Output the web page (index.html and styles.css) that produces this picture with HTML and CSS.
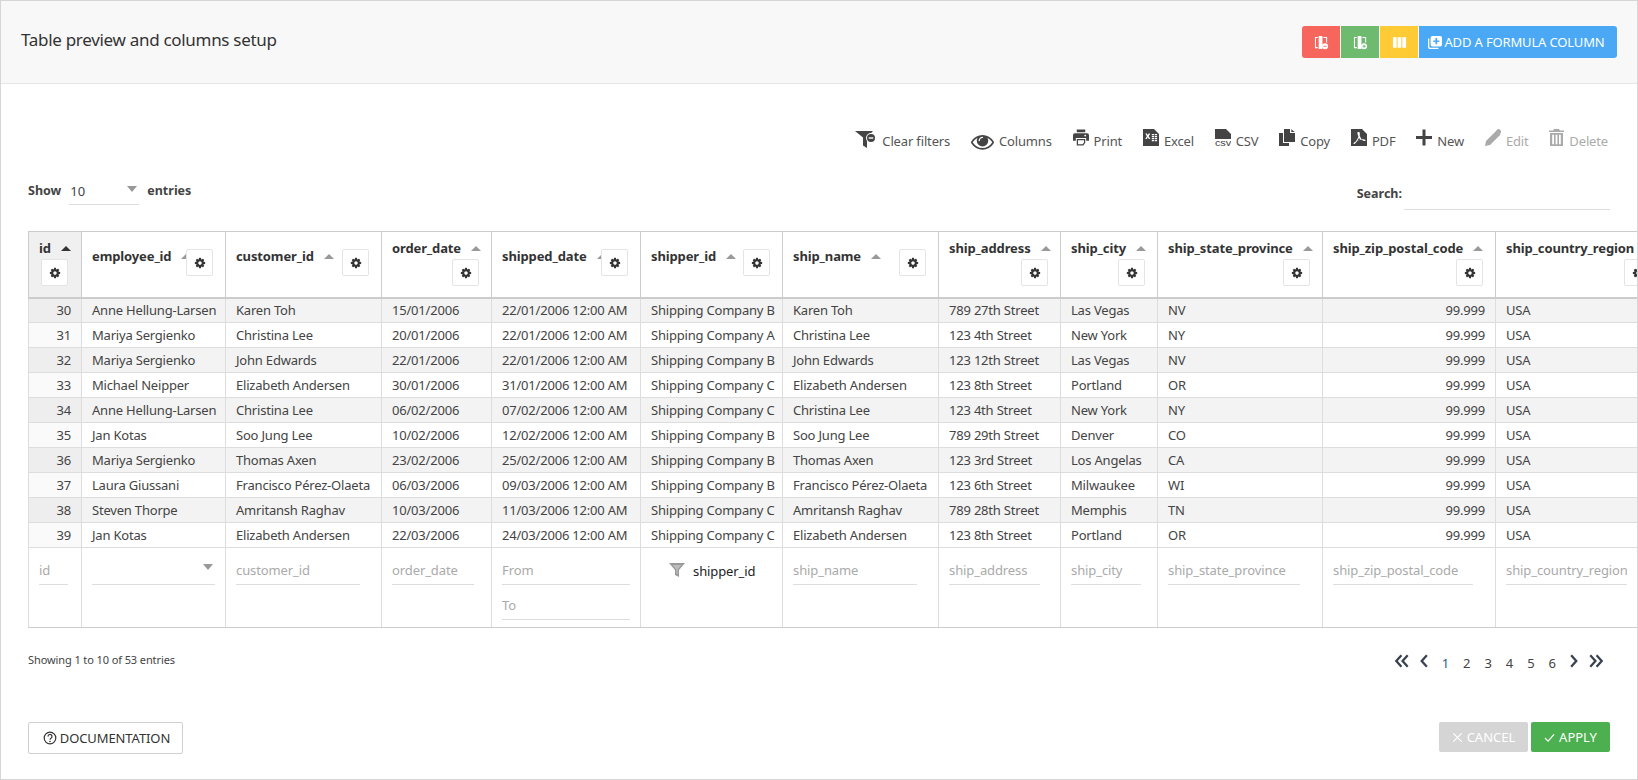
FILE: index.html
```html
<!DOCTYPE html>
<html lang="en">
<head>
<meta charset="utf-8">
<title>Table preview and columns setup</title>
<link rel="stylesheet" href="styles.css">
</head>
<body>
<svg class="defs" aria-hidden="true">
  <symbol id="cog" viewBox="0 0 1792 1792"><path d="M1152 896q0-106-75-181t-181-75-181 75-75 181 75 181 181 75 181-75 75-181zm512-109v222q0 12-8 23t-20 13l-185 28q-19 54-39 91 35 50 107 138 10 12 10 25t-9 23q-27 37-99 108t-94 71q-12 0-26-9l-138-108q-44 23-91 38-16 136-29 186-7 28-36 28h-222q-14 0-24.500-8.500t-11.500-21.500l-28-184q-49-16-90-37l-141 107q-10 9-25 9-14 0-25-11-126-114-165-168-7-10-7-23 0-12 8-23 15-21 51-66.500t54-70.500q-27-50-41-99l-183-27q-13-2-21-12.500t-8-23.500v-222q0-12 8-23t19-13l186-28q14-46 39-92-40-57-107-138-10-12-10-24 0-10 9-23 26-36 98.500-107.500t94.500-71.500q13 0 26 10l138 107q44-23 91-38 16-136 29-186 7-28 36-28h222q14 0 24.500 8.500t11.500 21.500l28 184q49 16 90 37l142-107q9-9 24-9 13 0 25 10 129 119 165 170 7 8 7 22 0 12-8 23-15 21-51 66.500t-54 70.500q26 50 41 98l183 28q13 2 21 12.500t8 23.500z"/></symbol>
  <symbol id="funnel" viewBox="0 0 16 16"><path d="M0 1h16l-6 7v7l-4-2V8z" fill-rule="evenodd"/><path d="M3.500 3h9l-3.800 4.400v4.800l-1.400-.7V7.400z" fill="#fff" opacity=".35"/></symbol>
</svg>
<main class="panel">
  <header class="head">
    <h1 class="title">Table preview and columns setup</h1>
    <div class="actions">
      <button class="act red" aria-label="Remove column"><svg class="act-i" viewBox="0 0 16 16"><path d="M1 2h3v1.100H2.100v9.800H4V14H1zM5 1h4v14H5zM10 2h4v6h-1.100V3.100H10z"/><circle cx="11.800" cy="12" r="3.200"/><path d="M10.200 11.500h3.200v1h-3.200z" fill="#f7665d"/></svg></button>
      <button class="act green" aria-label="Add column"><svg class="act-i" viewBox="0 0 16 16"><path d="M1 2h3v1.100H2.100v9.800H4V14H1zM5 1h4v14H5zM10 2h4v6h-1.100V3.100H10z"/><circle cx="11.800" cy="12" r="3.200"/><path d="M11.300 10.300h1v1.200h1.200v1h-1.200v1.200h-1v-1.200h-1.200v-1h1.200z" fill="#6ebb6f"/></svg></button>
      <button class="act yellow" aria-label="Columns"><svg class="act-i" viewBox="0 0 16 16"><path d="M1 2.500h4v11H1zM6 2.500h4v11H6zM11 2.500h4v11h-4z"/></svg></button>
      <button class="act blue"><svg class="act-i plus-i" viewBox="0 0 16 16"><path d="M5 1h9a2 2 0 0 1 2 2v8a2 2 0 0 1-2 2H5a2 2 0 0 1-2-2V3a2 2 0 0 1 2-2zm3.500 2.500v2.700H6v1.700h2.500v2.600h2V7.900H13V6.200h-2.500V3.500z" fill-rule="evenodd"/><path d="M0 4h1.500v9.500a1 1 0 0 0 1 1H12V16H2a2 2 0 0 1-2-2z"/></svg>ADD A FORMULA COLUMN</button>
    </div>
  </header>

  <section class="body">
    <nav class="tools">
      <a class="tool"><svg class="ti ti-filter" viewBox="0 0 22 18"><path d="M0 0h18l-6 6.500V17l-4-2.500V6.500z"/><circle cx="16" cy="7" r="5" fill="#fff"/><circle cx="16" cy="7" r="4"/><path d="M13.700 6.300h4.600v1.400h-4.600z" fill="#fff"/></svg>Clear filters</a>
      <a class="tool"><svg class="ti ti-eye" viewBox="0 0 1792 1792"><path d="M1664 960q-152-236-381-353 61 104 61 225 0 185-131.500 316.500t-316.500 131.500-316.500-131.500-131.500-316.500q0-121 61-225-229 117-381 353 133 205 333.500 326.500t434.500 121.500 434.500-121.500 333.500-326.500zm-720-384q0-20-14-34t-34-14q-125 0-214.500 89.500t-89.500 214.500q0 20 14 34t34 14 34-14 14-34q0-86 61-147t147-61q20 0 34-14t14-34zm848 384q0 34-20 69-140 230-376.500 368.500t-499.500 138.500-499.500-139-376.500-368q-20-35-20-69t20-69q140-229 376.500-368t499.500-139 499.500 139 376.500 368q20 35 20 69z"/></svg>Columns</a>
      <a class="tool"><svg class="ti" viewBox="0 0 17 17"><path d="M4 0h9v3H4zM2 4h13a2 2 0 0 1 2 2v6h-3V9H3v3H0V6a2 2 0 0 1 2-2zm11 1.500a1 1 0 1 0 0 2 1 1 0 0 0 0-2z" fill-rule="evenodd"/><path d="M4 10h9v4l-2 3H4zm1.300 1.300v4.400h4.900l1.500-2v-2.400z" fill-rule="evenodd"/></svg>Print</a>
      <a class="tool"><svg class="ti" viewBox="0 0 16 17"><path d="M0 0h11l5 5v12H0z"/><path d="M2.300 4.500h1.600l.9 1.500.9-1.500h1.600L5.700 7.200l1.700 2.800H5.800l-1-1.700-1 1.700H2.200l1.700-2.800zM8.800 5h2.300v1.200H8.800zm3 0h2.300v1.200h-2.300zM8.800 7h2.300v1.200H8.800zm3 0h2.300v1.200h-2.300zM8.800 9h2.300v1.200H8.800zm3 0h2.300v1.200h-2.300zM8.800 11h2.300v1.200H8.800zm3 0h2.300v1.200h-2.300z" fill="#fff"/></svg>Excel</a>
      <a class="tool"><svg class="ti" viewBox="0 0 16 17"><path d="M0 0h11l5 5v5H0z"/><text class="csv-t" x="0" y="16.500" textLength="16" lengthAdjust="spacingAndGlyphs">csv</text></svg>CSV</a>
      <a class="tool"><svg class="ti" viewBox="0 0 16 17"><path d="M5 0h6v4h5v9H5z"/><path d="M12.300.3 15.700 3h-3.400zM0 4h4v10h6v3H0z"/></svg>Copy</a>
      <a class="tool"><svg class="ti" viewBox="0 0 16 17"><path d="M0 0h11l5 5v12H0zm7.200 3c-.6 0-.9.600-.8 1.300.1 1 .5 2.100 1 3.100-.5 1.700-1.500 3.600-2.700 5-1 .5-2.200 1.300-2.200 2.100 0 .5.500.7 1 .4 1.100-.5 2-1.800 2.900-3.100 1.400-.6 3-1 4.500-1.100.8.800 1.900 1.500 2.900 1.400.9 0 1-1 .2-1.300-1-.4-2.100-.5-3.200-.4-.9-1.100-1.700-2.400-2.100-3.600.2-1.100.3-2.300-.1-3.300-.1-.3-.2-.5-.4-.5zM8 8.700c.4.800.9 1.500 1.500 2.100-1.100.2-2.100.4-3.100.8.600-.9 1.200-1.900 1.600-2.900z" fill-rule="evenodd"/></svg>PDF</a>
      <a class="tool"><svg class="ti" viewBox="0 0 16 16"><path d="M6.500 0h3v6.500H16v3H9.500V16h-3V9.500H0v-3h6.500z"/></svg>New</a>
      <a class="tool off"><svg class="ti" viewBox="0 0 16 17"><path d="M0 17l1-5L11.500 1.500l4 4L5 16zM12.500.5c.7-.7 1.500-.7 2.100-.1l1.500 1.500c.6.600.6 1.400-.1 2.100L14.800 4.700l-3.500-3.500z"/></svg>Edit</a>
      <a class="tool off"><svg class="ti ti-trash" viewBox="0 0 15 17"><path d="M5 0h5l1 1.500h4v1.500H0V1.500h4zM1 4h13v13H1zm2.200 1.800v9.400h1.800V5.800zm3.400 0v9.400h1.800V5.800zm3.400 0v9.400h1.800V5.800z" fill-rule="evenodd"/></svg>Delete</a>
    </nav>

    <div class="controls">
      <div class="length">
        <span class="ctl-label">Show</span>
        <span class="select"><span>10</span><i class="caret"></i></span>
        <span class="ctl-label">entries</span>
      </div>
      <label class="search"><span class="ctl-label">Search:</span><input class="search-in" type="text"></label>
    </div>

    <div class="table-wrap">
      <table class="grid">
        <thead>
          <tr>
            <th class="c-id sorted"><div class="hd stack"><span class="lb">id<i class="arrow dark"></i></span><button class="gear"><svg><use href="#cog"/></svg></button></div></th>
            <th class="c-emp"><div class="hd"><span class="lb">employee_id<i class="arrow"></i></span><button class="gear"><svg><use href="#cog"/></svg></button></div></th>
            <th class="c-cus"><div class="hd"><span class="lb">customer_id<i class="arrow"></i></span><button class="gear"><svg><use href="#cog"/></svg></button></div></th>
            <th class="c-ord"><div class="hd stack"><span class="lb">order_date<i class="arrow"></i></span><button class="gear"><svg><use href="#cog"/></svg></button></div></th>
            <th class="c-shd"><div class="hd"><span class="lb">shipped_date<i class="arrow"></i></span><button class="gear"><svg><use href="#cog"/></svg></button></div></th>
            <th class="c-spr"><div class="hd"><span class="lb">shipper_id<i class="arrow"></i></span><button class="gear"><svg><use href="#cog"/></svg></button></div></th>
            <th class="c-nam"><div class="hd"><span class="lb">ship_name<i class="arrow"></i></span><button class="gear"><svg><use href="#cog"/></svg></button></div></th>
            <th class="c-adr"><div class="hd stack"><span class="lb">ship_address<i class="arrow"></i></span><button class="gear"><svg><use href="#cog"/></svg></button></div></th>
            <th class="c-cit"><div class="hd stack"><span class="lb">ship_city<i class="arrow"></i></span><button class="gear"><svg><use href="#cog"/></svg></button></div></th>
            <th class="c-sta"><div class="hd stack"><span class="lb">ship_state_province<i class="arrow"></i></span><button class="gear"><svg><use href="#cog"/></svg></button></div></th>
            <th class="c-zip"><div class="hd stack"><span class="lb">ship_zip_postal_code<i class="arrow"></i></span><button class="gear"><svg><use href="#cog"/></svg></button></div></th>
            <th class="c-cou"><div class="hd stack"><span class="lb">ship_country_region<i class="arrow"></i></span><button class="gear"><svg><use href="#cog"/></svg></button></div></th>
          </tr>
        </thead>
        <tbody>
          <tr><td class="num">30</td><td>Anne Hellung-Larsen</td><td>Karen Toh</td><td>15/01/2006</td><td>22/01/2006 12:00 AM</td><td>Shipping Company B</td><td>Karen Toh</td><td>789 27th Street</td><td>Las Vegas</td><td>NV</td><td class="right">99.999</td><td>USA</td></tr>
          <tr><td class="num">31</td><td>Mariya Sergienko</td><td>Christina Lee</td><td>20/01/2006</td><td>22/01/2006 12:00 AM</td><td>Shipping Company A</td><td>Christina Lee</td><td>123 4th Street</td><td>New York</td><td>NY</td><td class="right">99.999</td><td>USA</td></tr>
          <tr><td class="num">32</td><td>Mariya Sergienko</td><td>John Edwards</td><td>22/01/2006</td><td>22/01/2006 12:00 AM</td><td>Shipping Company B</td><td>John Edwards</td><td>123 12th Street</td><td>Las Vegas</td><td>NV</td><td class="right">99.999</td><td>USA</td></tr>
          <tr><td class="num">33</td><td>Michael Neipper</td><td>Elizabeth Andersen</td><td>30/01/2006</td><td>31/01/2006 12:00 AM</td><td>Shipping Company C</td><td>Elizabeth Andersen</td><td>123 8th Street</td><td>Portland</td><td>OR</td><td class="right">99.999</td><td>USA</td></tr>
          <tr><td class="num">34</td><td>Anne Hellung-Larsen</td><td>Christina Lee</td><td>06/02/2006</td><td>07/02/2006 12:00 AM</td><td>Shipping Company C</td><td>Christina Lee</td><td>123 4th Street</td><td>New York</td><td>NY</td><td class="right">99.999</td><td>USA</td></tr>
          <tr><td class="num">35</td><td>Jan Kotas</td><td>Soo Jung Lee</td><td>10/02/2006</td><td>12/02/2006 12:00 AM</td><td>Shipping Company B</td><td>Soo Jung Lee</td><td>789 29th Street</td><td>Denver</td><td>CO</td><td class="right">99.999</td><td>USA</td></tr>
          <tr><td class="num">36</td><td>Mariya Sergienko</td><td>Thomas Axen</td><td>23/02/2006</td><td>25/02/2006 12:00 AM</td><td>Shipping Company B</td><td>Thomas Axen</td><td>123 3rd Street</td><td>Los Angelas</td><td>CA</td><td class="right">99.999</td><td>USA</td></tr>
          <tr><td class="num">37</td><td>Laura Giussani</td><td>Francisco Pérez-Olaeta</td><td>06/03/2006</td><td>09/03/2006 12:00 AM</td><td>Shipping Company B</td><td>Francisco Pérez-Olaeta</td><td>123 6th Street</td><td>Milwaukee</td><td>WI</td><td class="right">99.999</td><td>USA</td></tr>
          <tr><td class="num">38</td><td>Steven Thorpe</td><td>Amritansh Raghav</td><td>10/03/2006</td><td>11/03/2006 12:00 AM</td><td>Shipping Company C</td><td>Amritansh Raghav</td><td>789 28th Street</td><td>Memphis</td><td>TN</td><td class="right">99.999</td><td>USA</td></tr>
          <tr><td class="num">39</td><td>Jan Kotas</td><td>Elizabeth Andersen</td><td>22/03/2006</td><td>24/03/2006 12:00 AM</td><td>Shipping Company C</td><td>Elizabeth Andersen</td><td>123 8th Street</td><td>Portland</td><td>OR</td><td class="right">99.999</td><td>USA</td></tr>
        </tbody>
        <tfoot>
          <tr>
            <td><input class="f f-id" placeholder="id"></td>
            <td><span class="f f-emp f-select"><i class="caret"></i></span></td>
            <td><input class="f f-cus" placeholder="customer_id"></td>
            <td><input class="f f-ord" placeholder="order_date"></td>
            <td><input class="f f-shd" placeholder="From"><input class="f f-shd" placeholder="To"></td>
            <td><span class="f-shipper"><svg class="funnel"><use href="#funnel"/></svg>shipper_id</span></td>
            <td><input class="f f-nam" placeholder="ship_name"></td>
            <td><input class="f f-adr" placeholder="ship_address"></td>
            <td><input class="f f-cit" placeholder="ship_city"></td>
            <td><input class="f f-sta" placeholder="ship_state_province"></td>
            <td><input class="f f-zip" placeholder="ship_zip_postal_code"></td>
            <td><input class="f f-cou" placeholder="ship_country_region"></td>
          </tr>
        </tfoot>
      </table>
    </div>

    <div class="info-row">
      <div class="info">Showing 1 to 10 of 53 entries</div>
      <nav class="pager">
        <a class="chev"><svg viewBox="0 0 14 12"><path d="M6.500 1 2 6l4.500 5M12 1 7.500 6l4.500 5"/></svg></a>
        <a class="chev"><svg viewBox="0 0 14 12"><path d="M9.500 1 5 6l4.500 5"/></svg></a>
        <a class="pg current">1</a><a class="pg">2</a><a class="pg">3</a><a class="pg">4</a><a class="pg">5</a><a class="pg">6</a>
        <a class="chev"><svg viewBox="0 0 14 12"><path d="M4.500 1 9 6l-4.500 5"/></svg></a>
        <a class="chev"><svg viewBox="0 0 14 12"><path d="M2 1l4.500 5L2 11M7.500 1 12 6l-4.500 5"/></svg></a>
      </nav>
    </div>

    <footer class="foot">
      <button class="doc"><svg class="doc-i" viewBox="0 0 14 14"><circle cx="7" cy="7" r="5.800"/><path d="M5 5.500a2 2 0 1 1 3 1.700c-.7.400-1 .8-1 1.500"/><circle class="dot" cx="7" cy="10.500" r=".8"/></svg>DOCUMENTATION</button>
      <div class="foot-r">
        <button class="fbtn cancel"><svg class="f-i" viewBox="0 0 12 12"><path d="M1.500 1.500l9 9M10.500 1.500l-9 9"/></svg>CANCEL</button>
        <button class="fbtn apply"><svg class="f-i" viewBox="0 0 12 12"><path d="M1 6.500 4.500 10 11 2.500"/></svg>APPLY</button>
      </div>
    </footer>
  </section>
</main>
</body>
</html>
```
FILE: styles.css
```css
* { box-sizing: border-box; }
html, body { margin: 0; padding: 0; background: #fff; }
body { font-family: "Noto Sans", "Open Sans", sans-serif; font-size: 13px; color: #444; overflow: hidden; }
.defs { display: none; }
button { font-family: inherit; cursor: pointer; }
input { font-family: inherit; }

.panel { height: 780px; width: 1638px; border: 1px solid #d6d6d6; display: flex; flex-direction: column; }

.head { height: 83px; flex: none; background: #f8f8f8; border-bottom: 1px solid #e6e6e6; display: flex; justify-content: space-between; padding: 25px 20px 0 20px; }
.title { margin: -1px 0 0; font-size: 17px; font-weight: 400; color: #333; line-height: 30px; letter-spacing: -.3px; }
.actions { display: flex; gap: 1px; height: 32px; }
.act { border: 0; height: 32px; width: 38px; padding: 0; color: #fff; display: flex; align-items: center; justify-content: center; font-size: 13px; letter-spacing: -.15px; }
.act-i { width: 15px; height: 15px; fill: #fff; }
.red { background: #f7665d; border-radius: 3px 0 0 3px; }
.green { background: #6ebb6f; }
.yellow { background: #fecb35; }
.blue { background: #4aa8f5; width: 198px; border-radius: 0 3px 3px 0; padding-right: 3px; }
.plus-i { width: 14px; height: 14px; margin-right: 2px; }

.body { flex: 1; display: flex; flex-direction: column; min-height: 0; padding: 0 0 0 27px; }

.tools { display: flex; justify-content: flex-end; gap: 20.800px; padding: 45px 29px 0 0; height: 77px; letter-spacing: -.15px; }
.tool { display: flex; align-items: center; gap: 5px; height: 24px; color: #555; }
.tool.off { color: #aaa; }
.ti { width: 16px; height: 17px; fill: #444; margin-top: -7px; }
.off .ti { fill: #aaa; }
.ti-filter { width: 22px; height: 18px; margin-top: -3px; }
.ti-eye { width: 23px; height: 23px; margin-top: 0; }
.ti-trash { width: 15px; }
.csv-t { font-family: "Liberation Sans", sans-serif; font-size: 9px; font-weight: 400; fill: #444; }

.controls { display: flex; justify-content: space-between; height: 70px; padding: 15px 27px 0 0; align-items: flex-start; }
.length { display: flex; align-items: center; height: 29px; }
.ctl-label { font-weight: 700; font-size: 12.500px; color: #444; }
.select { width: 70px; height: 29px; margin: 0 8px; border-bottom: 1px solid #ddd; display: flex; align-items: center; justify-content: space-between; padding: 2px 2px 0 1px; font-size: 13px; }
.caret { width: 0; height: 0; border-left: 5px solid transparent; border-right: 5px solid transparent; border-top: 6px solid #999; }
.select .caret { margin-top: -5px; }
.search { display: flex; align-items: center; }
.search-in { width: 206px; height: 34px; margin-left: 2px; border: 0; border-bottom: 1px solid #ddd; outline: 0; background: transparent; }

.table-wrap { flex: none; height: 397px; overflow: hidden; }
.grid { table-layout: fixed; width: 1636px; border-collapse: collapse; border-left: 1px solid #ccc; }
.grid th { border: 1px solid #ccc; border-bottom: 2px solid #ccc; padding: 7px 12px 10px 10px; text-align: left; vertical-align: middle; font-weight: 700; color: #333; height: 66px; letter-spacing: -.12px; }
.grid th.c-id { padding-right: 13px; }
.grid tbody td { border: 1px solid #ddd; height: 25px; padding: 0 10px; white-space: nowrap; overflow: hidden; line-height: 17px; color: #444; letter-spacing: -.2px; }
.grid tbody tr:nth-child(odd) td { background: #f3f3f3; }
.grid tbody td.num { text-align: right; background: #fafafa; }
.grid tbody tr:nth-child(odd) td.num { background: #eee; }
.grid td.right { text-align: right; }
.grid tfoot td { border: 1px solid #ddd; border-top: 1px solid #ccc; border-bottom: 2px solid #ccc; height: 80px; vertical-align: top; padding: 8px 0 0 10px; }
.sorted { background: #f0f0f0; }

.c-id { width: 53px; } .c-emp { width: 144px; } .c-cus { width: 156px; } .c-ord { width: 110px; }
.c-shd { width: 149px; } .c-spr { width: 142px; } .c-nam { width: 156px; } .c-adr { width: 122px; }
.c-cit { width: 97px; } .c-sta { width: 165px; } .c-zip { width: 173px; } .c-cou { width: 168px; }

.hd { display: flex; align-items: flex-start; }
.hd.stack { flex-direction: column; align-items: stretch; gap: 2px; }
.lb { flex: 1 1 0; min-width: 0; margin-top: -2px; white-space: nowrap; line-height: 18px; display: flex; align-items: center; }
.hd.stack .lb { flex: none; margin-top: 0; }
.arrow { flex: none; width: 0; height: 0; margin-left: 10px; border-left: 5px solid transparent; border-right: 5px solid transparent; border-bottom: 5px solid #999; }
.arrow.dark { border-bottom-color: #333; }
.gear { flex: none; width: 27px; height: 27px; padding: 0; background: #fff; border: 1px solid #e4e4e4; border-radius: 2px; display: flex; align-items: center; justify-content: center; }
.hd.stack .gear { align-self: flex-end; }
.gear svg { width: 12px; height: 12px; fill: #333; }

.f { display: block; border: 0; border-bottom: 1px solid #ddd; height: 29px; padding: 0; background: transparent; font-size: 13px; outline: 0; margin-bottom: 6px; color: #444; letter-spacing: -.1px; }
.f::placeholder { color: #aaa; opacity: 1; }
.f-id { width: 29px; } .f-emp { width: 123px; } .f-cus { width: 124px; } .f-ord { width: 82px; }
.f-shd { width: 128px; } .f-nam { width: 124px; } .f-adr { width: 91px; } .f-cit { width: 70px; }
.f-sta { width: 132px; } .f-zip { width: 140px; } .f-cou { width: 121px; }
.f-select { display: flex; justify-content: flex-end; padding: 8px 2px 0 0; }
.f-shipper { display: flex; align-items: center; gap: 8px; margin: 6px 0 0 18px; color: #222; height: 18px; letter-spacing: -.1px; }
.funnel { width: 16px; height: 16px; fill: #999; margin-top: -3px; }

.info-row { flex: none; display: flex; justify-content: space-between; align-items: flex-start; height: 94px; padding: 21px 30px 0 0; }
.info { font-size: 11px; line-height: 18px; color: #444; margin-top: 2px; letter-spacing: -.1px; }
.pager { display: flex; align-items: center; height: 24px; color: #444; }
.pg { width: 21.400px; text-align: center; font-size: 13px; padding-top: 3px; }
.pg.current { color: #2a5d7a; }
.chev { width: 22px; height: 14px; display: flex; justify-content: center; }
.chev svg { width: 16px; height: 14px; fill: none; stroke: #3a4150; stroke-width: 2; }

.foot { flex: none; display: flex; justify-content: space-between; align-items: flex-start; padding-right: 27px; }
.doc { width: 155px; height: 32px; background: #fff; border: 1px solid #d0d0d0; border-radius: 2px; color: #333; font-size: 13px; display: flex; align-items: center; justify-content: center; gap: 3px; padding: 0 0 0 2px; letter-spacing: -.1px; }
.doc-i { width: 14px; height: 14px; fill: none; stroke: #333; stroke-width: 1.200; }
.doc-i .dot { fill: #333; stroke: none; }
.foot-r { display: flex; gap: 3px; }
.fbtn { height: 30px; border: 0; border-radius: 2px; color: #fff; font-size: 13px; display: flex; align-items: center; justify-content: center; gap: 4px; padding: 0; }
.f-i { width: 11px; height: 11px; fill: none; stroke: #fff; stroke-width: 1.300; }
.cancel { width: 89px; background: #d5d5d5; }
.apply { width: 79px; background: #4caf50; }
```
